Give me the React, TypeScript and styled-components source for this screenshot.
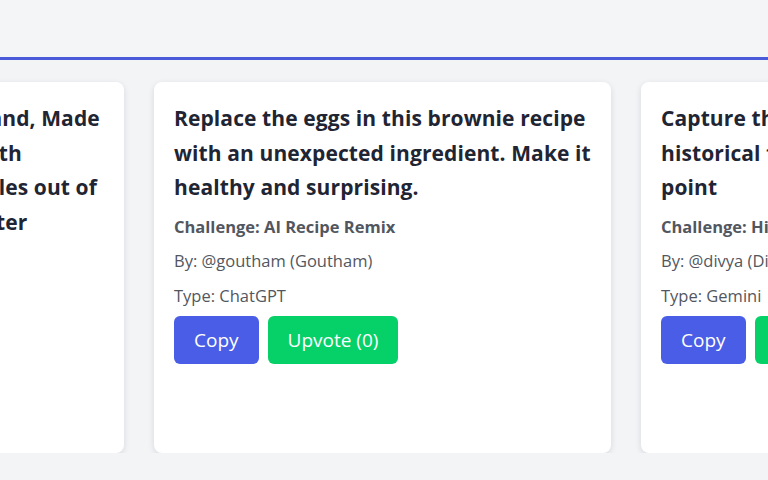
import styled, { createGlobalStyle } from 'styled-components';

const GlobalStyle = createGlobalStyle`
	html, body {
		margin: 0;
		padding: 0;
		background: #f3f4f6;
		font-family: 'Open Sans', 'Noto Sans', sans-serif;
	}
	* {
		box-sizing: border-box;
	}
`;

const Page = styled.div`
	width: 768px;
	height: 480px;
	overflow: hidden;
	background: #f3f4f6;
`;

const Header = styled.header`
	height: 60px;
	border-bottom: 3px solid #4a5ad8;
	background: #f3f5f7;
`;

const Carousel = styled.section`
	padding-top: 22px;
	overflow: hidden;
`;

const Track = styled.div<{ $offset: number }>`
	display: flex;
	gap: 30px;
	margin-left: ${(p) => p.$offset}px;
`;

const Card = styled.article`
	flex: 0 0 457px;
	height: 371px;
	background: #fff;
	border-radius: 8px;
	box-shadow: 0 2px 6px rgba(15, 23, 42, 0.12);
	padding: 19px 20px;
	display: flex;
	flex-direction: column;
`;

const Title = styled.h2`
	margin: 0 0 5px;
	font-size: 21px;
	line-height: 34.5px;
	font-weight: 700;
	color: #1f2533;
	letter-spacing: 0.1px;
`;

const Meta = styled.p<{ $bold?: boolean }>`
	margin: 0;
	font-size: 16.5px;
	line-height: 34.5px;
	color: #52575f;
	font-weight: ${(p) => (p.$bold ? 700 : 400)};
`;

const Actions = styled.div`
	display: flex;
	gap: 9px;
	margin-top: 3px;
`;

const Button = styled.button<{ $tone: 'blue' | 'green' }>`
	height: 48px;
	padding: 0 20px;
	border: none;
	border-radius: 6px;
	font-family: inherit;
	font-size: 19px;
	color: #fff;
	background: ${(p) => (p.$tone === 'blue' ? '#4a5de6' : '#06d169')};
	cursor: pointer;
`;

const prompts = [
	{
		title: "Cook lunch from what's on hand, Made entirely from pantry items with leftover produce and vegetables out of the fridge, some salts and water",
		challenge: 'Leftover Kitchen',
		by: '@ravi (Ravi)',
		type: 'ChatGPT'
	},
	{
		title: 'Replace the eggs in this brownie recipe with an unexpected ingredient. Make it healthy and surprising.',
		challenge: 'AI Recipe Remix',
		by: '@goutham (Goutham)',
		type: 'ChatGPT'
	},
	{
		title: 'Capture the spirit of a legendary historical figure at a defining turning point',
		challenge: 'Historical Snapshots',
		by: '@divya (Divya)',
		type: 'Gemini'
	}
];

function App() {
	return (
		<Page>
			<GlobalStyle />
			<Header />
			<Carousel>
				<Track $offset={-333}>
					{prompts.map((p) => (
						<Card key={p.challenge}>
							<Title>{p.title}</Title>
							<Meta $bold>Challenge: {p.challenge}</Meta>
							<Meta>By: {p.by}</Meta>
							<Meta>Type: {p.type}</Meta>
							<Actions>
								<Button $tone="blue">Copy</Button>
								<Button $tone="green">Upvote (0)</Button>
							</Actions>
						</Card>
					))}
				</Track>
			</Carousel>
		</Page>
	);
}

export default App;
